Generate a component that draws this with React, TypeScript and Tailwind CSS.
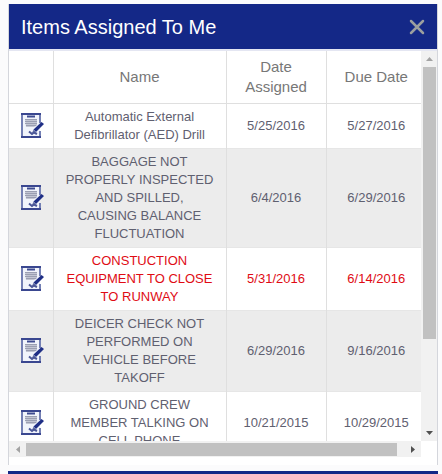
interface Item {
  name: string
  assigned: string
  due: string
  overdue?: boolean
}

const ITEMS: Item[] = [
  { name: 'Automatic External Defibrillator (AED) Drill', assigned: '5/25/2016', due: '5/27/2016' },
  {
    name: 'BAGGAGE NOT PROPERLY INSPECTED AND SPILLED, CAUSING BALANCE FLUCTUATION',
    assigned: '6/4/2016',
    due: '6/29/2016',
  },
  {
    name: 'CONSTUCTION EQUIPMENT TO CLOSE TO RUNWAY',
    assigned: '5/31/2016',
    due: '6/14/2016',
    overdue: true,
  },
  {
    name: 'DEICER CHECK NOT PERFORMED ON VEHICLE BEFORE TAKOFF',
    assigned: '6/29/2016',
    due: '9/16/2016',
  },
  { name: 'GROUND CREW MEMBER TALKING ON CELL PHONE', assigned: '10/21/2015', due: '10/29/2015' },
]

function FormIcon() {
  return (
    <svg width="24" height="26" viewBox="0 0 24 26" fill="none" aria-hidden="true">
      <path d="M1 1h18v23H1z" fill="#f1f4fb" />
      <path d="M1 0v25M19 0v10M19 18v7" stroke="#7480b4" strokeWidth="2" />
      <path d="M0 1h20M0 24h20" stroke="#3a4790" strokeWidth="2" />
      <path d="M6 3.500h8" stroke="#3f4c90" strokeWidth="2" />
      <path d="M4 6h12v6.500l-3 1.500H5z" fill="#c3c6d3" />
      <path d="M4 6.500h12M4 8.500h12M4 10.500h12M5 12.500h10" stroke="#9b9fb2" />
      <path d="M12.500 16.500L20.500 9l2.500 2-8 8z" fill="#1f2f86" />
      <path d="M12.500 16.500l2.500 2.500-4 1z" fill="#6d78ac" />
      <path d="M8 18.500l3 2.500 2-1.500 3 1.500" stroke="#4b5797" strokeWidth="2" />
    </svg>
  )
}

function ItemsTable() {
  return (
    <table className="w-full min-w-[417px] table-fixed border-collapse text-center">
      <colgroup>
        <col className="w-[44px]" />
        <col />
        <col className="w-[100px]" />
        <col className="w-[100px]" />
      </colgroup>
      <thead>
        <tr className="h-[52px] border-b border-[#dfdfdf] text-[15px] leading-5 text-[#777777]">
          <th className="border-r border-[#dfdfdf]" aria-label="Open" />
          <th className="border-r border-[#dfdfdf] font-normal">Name</th>
          <th className="border-r border-[#dfdfdf] px-4 font-normal">Date Assigned</th>
          <th className="font-normal">Due Date</th>
        </tr>
      </thead>
      <tbody>
        {ITEMS.map((item) => (
          <tr
            key={item.name}
            className={`border-b border-[#e6e6e6] text-[13px] leading-[18px] even:bg-[#ececec] ${
              item.overdue ? 'text-[#e00b14]' : 'text-[#5f6070]'
            }`}
          >
            <td className="border-r border-[#dfdfdf]">
              <button type="button" aria-label={`Open ${item.name}`} className="block pl-3">
                <FormIcon />
              </button>
            </td>
            <td className="border-r border-[#dfdfdf] px-[11px] py-1">{item.name}</td>
            <td className="border-r border-[#dfdfdf]">{item.assigned}</td>
            <td>{item.due}</td>
          </tr>
        ))}
      </tbody>
    </table>
  )
}

function VerticalScrollbar() {
  return (
    <div className="flex w-4 shrink-0 flex-col items-center bg-[#f1f1f1]" aria-hidden="true">
      <div className="flex h-4 items-center">
        <svg width="7" height="4" viewBox="0 0 7 4">
          <path d="M3.500 0L7 4H0z" fill="#a3a3a3" />
        </svg>
      </div>
      <div className="flex w-full grow flex-col items-center">
        <div className="h-[76%] w-[13px] bg-[#c1c1c1]" />
      </div>
      <div className="flex h-4 items-center">
        <svg width="7" height="4" viewBox="0 0 7 4">
          <path d="M3.500 4L7 0H0z" fill="#505050" />
        </svg>
      </div>
    </div>
  )
}

function HorizontalScrollbar() {
  return (
    <div className="mr-4 flex h-4 items-center bg-[#f1f1f1]" aria-hidden="true">
      <div className="flex w-[17px] justify-center">
        <svg width="4" height="7" viewBox="0 0 4 7">
          <path d="M0 3.500L4 0v7z" fill="#a3a3a3" />
        </svg>
      </div>
      <div className="grow">
        <div className="h-[13px] w-[98%] bg-[#c1c1c1]" />
      </div>
      <div className="flex w-4 justify-center">
        <svg width="4" height="7" viewBox="0 0 4 7">
          <path d="M4 3.500L0 0v7z" fill="#505050" />
        </svg>
      </div>
    </div>
  )
}

export default function App() {
  return (
    <main className="bg-[#fbfbfc] pr-1 pl-2 pt-1 font-['Liberation_Sans',Arial,sans-serif]">
      <section className="border-x border-[#d4d6dc] bg-white pb-2">
        <header className="flex h-[45px] items-center justify-between bg-[#142887] px-3">
          <h2 className="text-xl text-white">Items Assigned To Me</h2>
          <button type="button" aria-label="Close">
            <svg width="16" height="16" viewBox="0 0 16 16" fill="none">
              <path d="M2 2l12 12M14 2L2 14" stroke="#9c9f9f" strokeWidth="2.500" strokeLinecap="round" />
            </svg>
          </button>
        </header>
        <div className="flex h-[392px] border-t-2 border-[#e4e6f2]">
          <div className="min-w-0 grow overflow-hidden">
            <ItemsTable />
          </div>
          <VerticalScrollbar />
        </div>
        <HorizontalScrollbar />
      </section>
      <div className="mt-[6px] h-[3px] bg-[#142887]" />
    </main>
  )
}
